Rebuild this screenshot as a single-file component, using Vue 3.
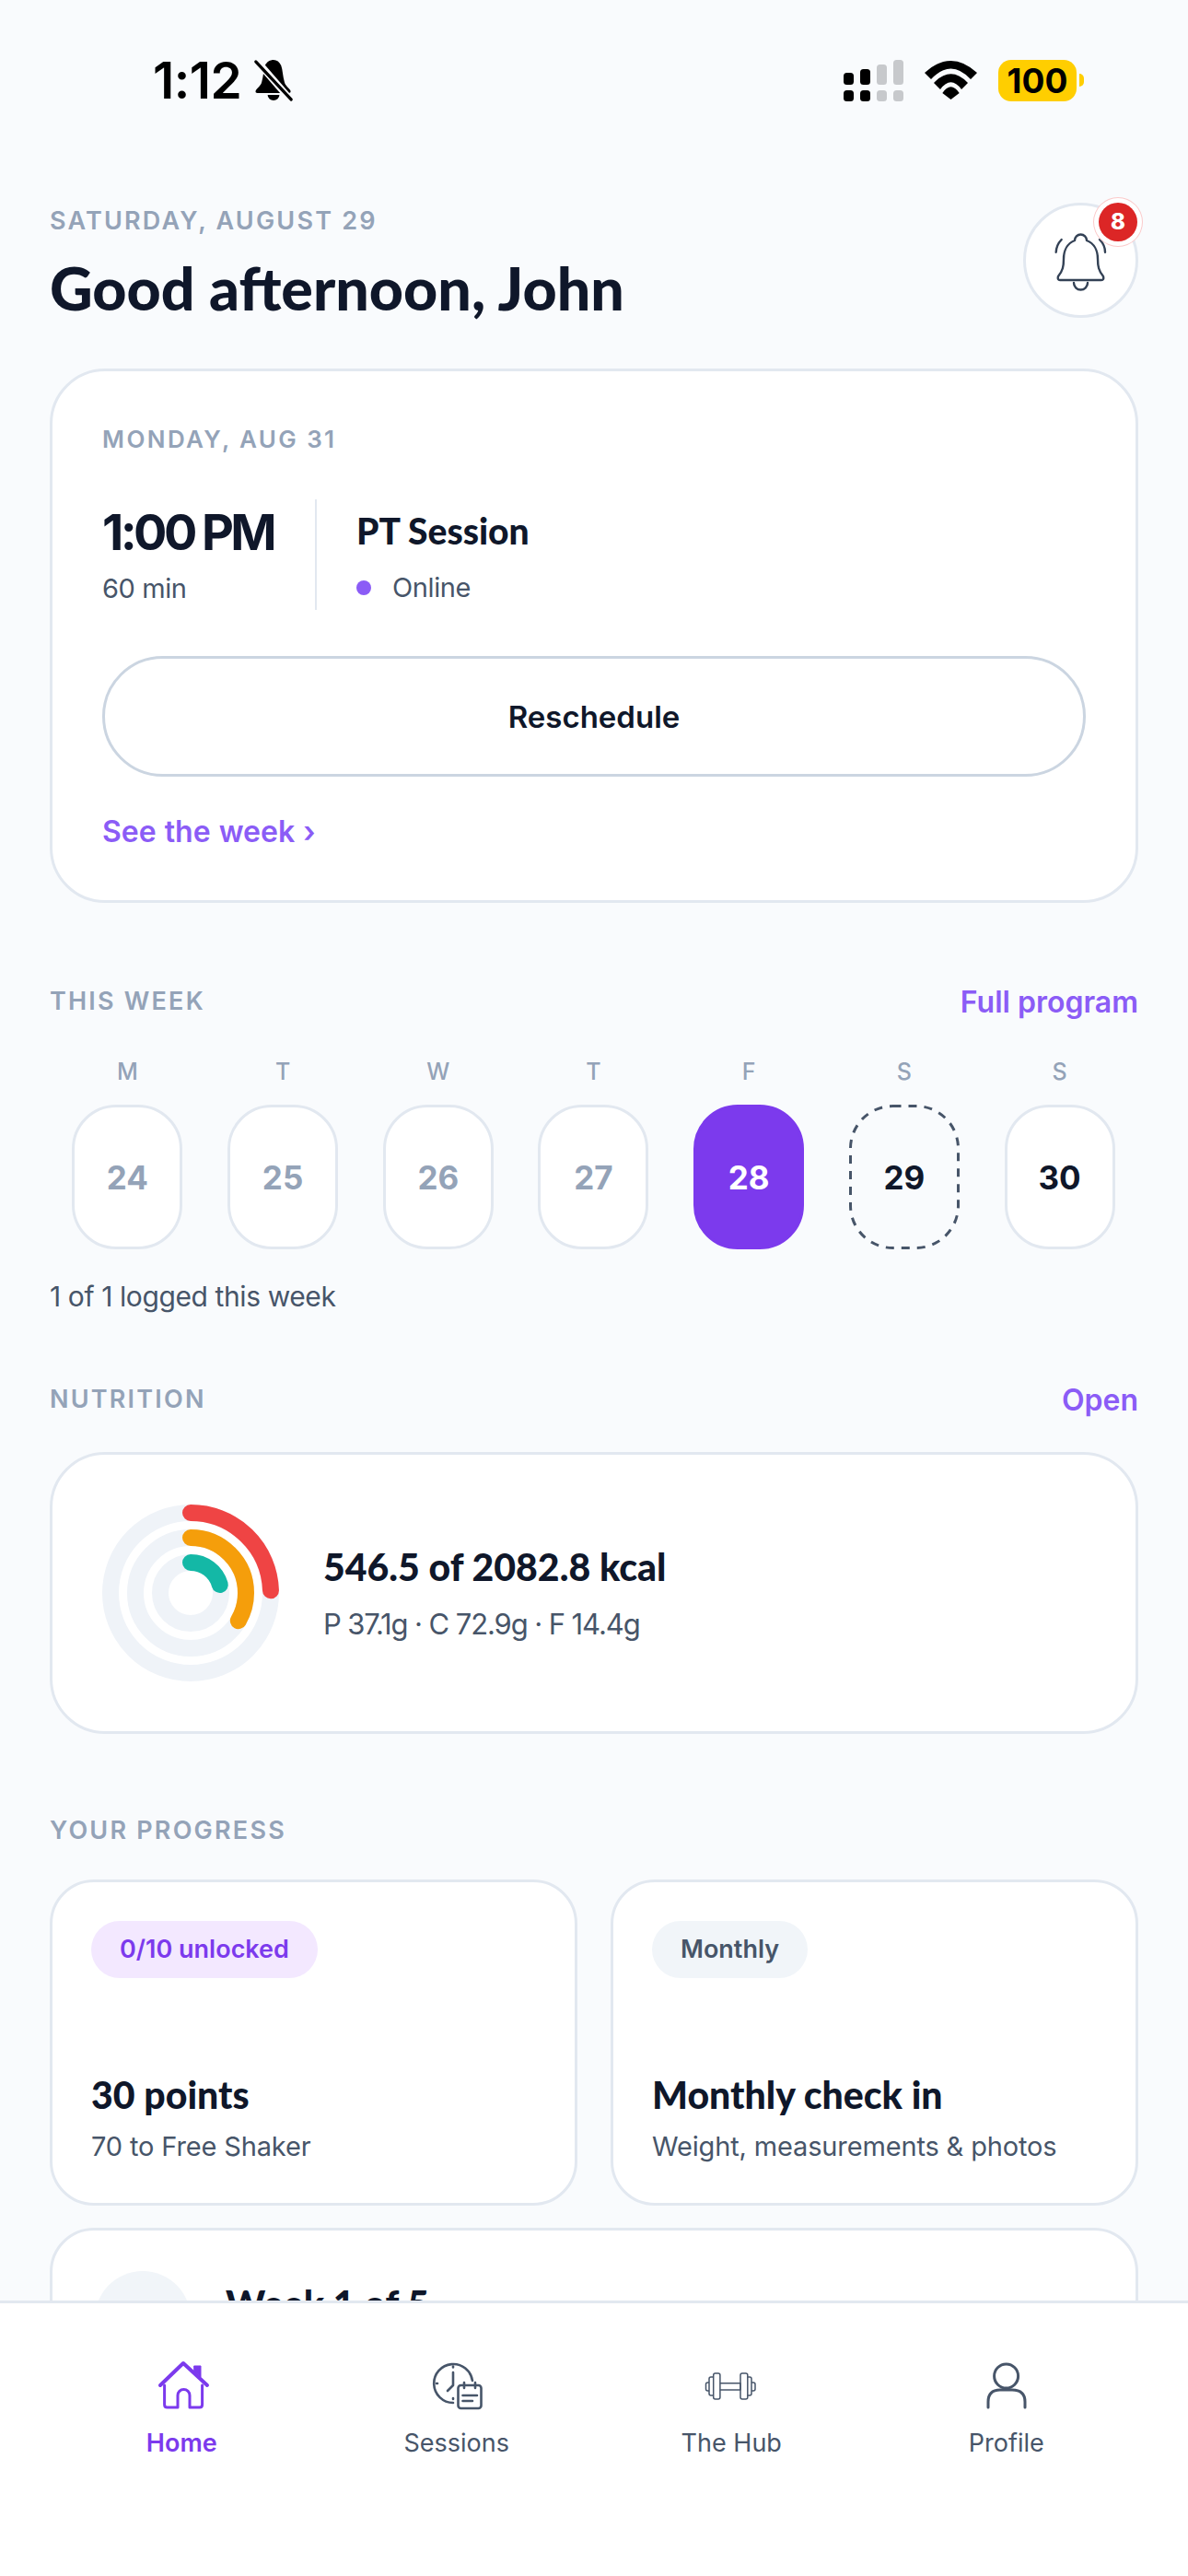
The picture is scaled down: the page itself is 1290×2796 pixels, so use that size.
<script setup>
const days = [
  { letter: 'M', num: 24, state: 'past' },
  { letter: 'T', num: 25, state: 'past' },
  { letter: 'W', num: 26, state: 'past' },
  { letter: 'T', num: 27, state: 'past' },
  { letter: 'F', num: 28, state: 'done' },
  { letter: 'S', num: 29, state: 'today' },
  { letter: 'S', num: 30, state: 'next' }
]

// angle = how far the arc runs clockwise from 12 o'clock
const rings = [
  { r: 87, angle: 88, color: '#ef4444' },
  { r: 60, angle: 120, color: '#f59e0b' },
  { r: 33, angle: 74, color: '#14b8a6' }
]

const dash = (ring) => {
  const len = 2 * Math.PI * ring.r
  return `${(len * ring.angle) / 360} ${len}`
}
</script>

<template>
  <div class="page">
    <div class="status-bar">
      <div class="status-left">
        <span class="clock">1:12</span>
        <svg class="mute" width="42" height="46" viewBox="0 0 46 46" preserveAspectRatio="none">
          <path d="M23 1c4 0 7 2 9 6 2 5 2 12 4 18 1 4 5 6 7 9 1 2 0 3-2 3H4c-2 0-3-1-2-3 2-3 6-5 7-9 2-6 2-13 4-18 2-4 6-6 10-6z" fill="#000" />
          <path d="M16 39a7 6 0 0 0 14 0z" fill="#000" />
          <path d="M4 3l38 40" stroke="#f9fafc" stroke-width="8" />
          <path d="M2 3l42 41" stroke="#000" stroke-width="3.4" stroke-linecap="round" />
        </svg>
      </div>
      <div class="status-right">
        <svg width="65" height="45" viewBox="0 0 65 45">
          <rect x="0" y="14" width="11" height="13" rx="3.5" />
          <rect x="18" y="10" width="11" height="17" rx="3.5" />
          <rect x="36" y="5" width="11" height="22" rx="3.5" fill="#c7c9cc" />
          <rect x="54" y="0" width="11" height="27" rx="3.5" fill="#c7c9cc" />
          <rect x="0" y="33" width="11" height="12" rx="3.5" />
          <rect x="18" y="33" width="11" height="12" rx="3.5" />
          <rect x="36" y="33" width="11" height="12" rx="3.5" fill="#c7c9cc" />
          <rect x="54" y="33" width="11" height="12" rx="3.5" fill="#c7c9cc" />
        </svg>
        <svg width="57" height="42" viewBox="0 0 57 42">
          <path d="M0 13Q28.5-13 57 13L50 20Q28.5-3 7 20Z" />
          <path d="M10 24Q28.5 4.600 47 24L40 31Q28.500 15.600 17 31Z" />
          <path d="M19.300 35Q28.500 21.600 37.700 35L28.500 42Z" />
        </svg>
        <div class="battery">
          <div class="battery-body">100</div>
          <div class="battery-tip"></div>
        </div>
      </div>
    </div>

    <main class="content">
      <header class="header">
        <div>
          <div class="eyebrow">SATURDAY, AUGUST 29</div>
          <h1 class="greeting">Good afternoon, John</h1>
        </div>
        <div class="bell-btn">
          <svg width="66" height="68" viewBox="0 0 66 68" fill="none" stroke="#334155" stroke-width="2.400" stroke-linecap="round" stroke-linejoin="round">
            <path d="M26 12a6.500 6.500 0 0 1 13 0C47 15 51 23 51 32C51 40 52 45 57 51Q58 55 55 55H10Q7 55 8 51C13 45 14 40 14 32C14 23 18 15 26 12Z" />
            <path d="M25 58a7.500 7.500 0 0 0 15 0" />
            <path d="M11.700 11Q6 17 5.700 24.700" />
            <path d="M53 11Q59 17 59 24.700" />
          </svg>
          <div class="badge">8</div>
        </div>
      </header>

      <section class="card session-card">
        <div class="card-date">MONDAY, AUG 31</div>
        <div class="session-row">
          <div class="session-time">
            <div class="time">1:00 PM</div>
            <div class="muted">60 min</div>
          </div>
          <div class="session-info">
            <div class="session-title">PT Session</div>
            <div class="muted online"><span class="dot"></span>Online</div>
          </div>
        </div>
        <button class="reschedule">Reschedule</button>
        <a class="see-week">See the week&nbsp;›</a>
      </section>

      <div class="section-head week-head">
        <span class="eyebrow">THIS WEEK</span>
        <a class="link">Full program</a>
      </div>
      <div class="week">
        <div v-for="d in days" :key="d.num" class="day">
          <span class="day-letter">{{ d.letter }}</span>
          <div class="day-pill" :class="d.state">
            <svg v-if="d.state === 'today'" class="dashes" width="120" height="157" viewBox="0 0 120 157" fill="none">
              <rect x="1.500" y="1.500" width="117" height="154" rx="46" stroke="#475569" stroke-width="3" stroke-dasharray="9 8" />
            </svg>
            {{ d.num }}
          </div>
        </div>
      </div>
      <p class="logged">1 of 1 logged this week</p>

      <div class="section-head nutrition-head">
        <span class="eyebrow">NUTRITION</span>
        <a class="link">Open</a>
      </div>
      <section class="card nutrition">
        <svg width="192" height="192" viewBox="0 0 192 192" fill="none" stroke-width="18">
          <circle v-for="ring in rings" :key="ring.r" cx="96" cy="96" :r="ring.r" stroke="#eff3f8" />
          <circle
            v-for="ring in rings"
            :key="ring.color"
            cx="96"
            cy="96"
            :r="ring.r"
            :stroke="ring.color"
            stroke-linecap="round"
            :stroke-dasharray="dash(ring)"
            transform="rotate(-90 96 96)"
          />
        </svg>
        <div>
          <div class="kcal">546.5 of 2082.8 kcal</div>
          <div class="macros">P 37.1g · C 72.9g · F 14.4g</div>
        </div>
      </section>

      <div class="section-head progress-head">
        <span class="eyebrow">YOUR PROGRESS</span>
      </div>
      <div class="progress-grid">
        <section class="card tile">
          <span class="tag tag-purple">0/10 unlocked</span>
          <div class="tile-title">30 points</div>
          <div class="tile-sub">70 to Free Shaker</div>
        </section>
        <section class="card tile">
          <span class="tag tag-grey">Monthly</span>
          <div class="tile-title">Monthly check in</div>
          <div class="tile-sub">Weight, measurements &amp; photos</div>
        </section>
      </div>
      <section class="card program">
        <div class="avatar"></div>
        <div class="tile-title">Week 1 of 5</div>
      </section>
    </main>

    <nav class="tabbar">
      <div class="tab active">
        <svg class="home-icon" width="60" height="56" viewBox="0 0 60 56" fill="none" stroke="#7c3aed" stroke-width="3" stroke-linecap="round" stroke-linejoin="round">
          <path d="M6 27L31 3L57 27" stroke-width="4" />
          <path d="M43 6h7v12l-7-6z" fill="#7c3aed" stroke-width="1" />
          <path d="M10.600 27V48q0 3 3 3H25V38a6.500 6.500 0 0 1 13 0V51H48.600q3 0 3-3V27" />
        </svg>
        <span>Home</span>
      </div>
      <div class="tab">
        <svg width="60" height="56" viewBox="0 0 60 56" fill="none" stroke="#475569" stroke-width="2.600" stroke-linecap="round" stroke-linejoin="round">
          <path d="M47 22A21 21 0 1 0 26 46" />
          <path d="M26 13V27L20 33" />
          <path d="M26 6.500v1M8 25h1M26 41v1" />
          <rect x="31.500" y="27" width="25" height="25" rx="3" />
          <path d="M38 24v6M50 24v6M36.500 38H52M36.500 44H47" />
        </svg>
        <span>Sessions</span>
      </div>
      <div class="tab">
        <svg width="60" height="56" viewBox="0 0 60 56" fill="none" stroke="#475569" stroke-width="1.500" stroke-linejoin="round">
          <rect x="10.700" y="14" width="7.200" height="28" rx="2" />
          <rect x="40" y="14" width="7.800" height="28" rx="2" />
          <path d="M10.700 18H8a2 2 0 0 0-2 2V36a2 2 0 0 0 2 2H10.700M47.800 18H50a2 2 0 0 1 2 2V36a2 2 0 0 1-2 2H47.800" />
          <path d="M6 24H4.500a2 2 0 0 0-2 2V31a2 2 0 0 0 2 2H6M52 24H54a2 2 0 0 1 2 2V31a2 2 0 0 1-2 2H52" />
          <path d="M17.900 24.700H40V32H17.900" />
        </svg>
        <span>The Hub</span>
      </div>
      <div class="tab">
        <svg width="60" height="56" viewBox="0 0 60 56" fill="none" stroke="#475569" stroke-width="3" stroke-linecap="round">
          <circle cx="29.600" cy="17" r="13" />
          <path d="M10 51V45Q10 32 23 32H36Q50 32 50 45V51" />
        </svg>
        <span>Profile</span>
      </div>
    </nav>
  </div>
</template>

<style scoped>
.page {
  position: relative;
  width: 1290px;
  height: 2796px;
  overflow: hidden;
  background: #f9fbfd;
  font-family: Inter, "Noto Sans", sans-serif;
  color: #0f172a;
}

.status-bar {
  height: 174px;
  display: flex;
  justify-content: space-between;
  align-items: center;
  padding: 0 113px 0 166px;
}
.status-left { display: flex; align-items: center; gap: 14px; }
.clock { font-size: 55px; font-weight: 600; color: #000; letter-spacing: -0.5px; line-height: 1; }
.status-right { display: flex; align-items: center; gap: 23px; }
.battery { display: flex; align-items: center; gap: 3px; }
.battery-body {
  width: 85px; height: 45px; background: #ffce00; border-radius: 14px;
  font-size: 37px; font-weight: 700; color: #000; text-align: center; line-height: 45px;
}
.battery-tip { width: 5px; height: 14px; background: #ffce00; border-radius: 0 5px 5px 0; }

.content { padding: 46px 54px 0; }

.header { display: flex; justify-content: space-between; }
.eyebrow {
  font-size: 27px; font-weight: 600; letter-spacing: 2.2px; color: #94a3b8; line-height: 40px;
}
.greeting {
  margin: 14px 0 0; font-family: Lato, sans-serif; font-size: 64.500px; font-weight: 900; line-height: 76px; color: #0f172a;
}
.bell-btn {
  position: relative; width: 125px; height: 125px; box-sizing: border-box; border-radius: 50%;
  background: #fff; border: 3px solid #e2e8f0; display: flex; align-items: center; justify-content: center;
}
.badge {
  position: absolute; top: -3px; right: -2px; width: 42px; height: 42px; border-radius: 50%;
  background: #dc2626; color: #fff; font-size: 24px; font-weight: 800; text-align: center; line-height: 42px;
  box-shadow: 0 0 0 5px #fff, 0 0 0 6px #fbcaca;
}

.card { background: #fff; border: 3px solid #e2e8f0; border-radius: 60px; box-sizing: border-box; }

.session-card { margin-top: 50px; height: 580px; padding: 54px 54px 0; }
.card-date { font-size: 26px; font-weight: 600; letter-spacing: 2.4px; color: #94a3b8; line-height: 40px; }
.session-row { display: flex; height: 120px; margin-top: 45px; }
.session-time { width: 231px; border-right: 2px solid #e2e8f0; box-sizing: content-box; }
.time { font-size: 54px; font-weight: 700; letter-spacing: -3.6px; word-spacing: -1px; line-height: 70px; margin-top: 1px; }
.muted { font-size: 29px; color: #475569; line-height: 40px; margin-top: 6px; letter-spacing: -0.4px; }
.session-info { padding-left: 43px; }
.session-title { font-family: Lato, sans-serif; font-size: 39px; font-weight: 900; line-height: 68px; margin-top: 0; }
.online { display: flex; align-items: center; gap: 23px; margin-top: 8px; }
.dot { width: 16px; height: 16px; border-radius: 50%; background: #8b5cf6; }
.reschedule {
  display: block; width: 100%; height: 131px; margin-top: 50px; background: #fff; border: 3px solid #cbd5e1; border-radius: 66px;
  font-family: inherit; font-size: 33px; font-weight: 600; color: #0f172a;
}
.see-week { display: block; margin-top: 40px; font-size: 32px; font-weight: 600; color: #8b5cf6; line-height: 40px; word-spacing: 1px; }

.section-head { display: flex; justify-content: space-between; align-items: center; }
.link { font-size: 32px; font-weight: 600; color: #8b5cf6; line-height: 40px; position: relative; top: 1px; }
.week-head { margin-top: 87px; }

.week { display: grid; grid-template-columns: repeat(7, 1fr); margin-top: 40px; padding-right: 1px; }
.day { display: flex; flex-direction: column; align-items: center; gap: 20px; }
.day-letter { font-size: 25px; font-weight: 500; color: #94a3b8; line-height: 32px; }
.day-pill {
  position: relative; width: 120px; height: 157px; box-sizing: border-box; border-radius: 48px; background: #fff; border: 3px solid #e2e8f0;
  display: flex; align-items: center; justify-content: center; font-size: 35px; font-weight: 700;
}
.day-pill.past { color: #94a3b8; }
.day-pill.done { background: #7c3aed; border-color: #7c3aed; color: #fff; }
.day-pill.today { background: transparent; border: none; }
.dashes { position: absolute; top: 0; left: 0; }
.logged { margin: 31px 0 0; font-size: 30px; line-height: 40px; color: #475569; letter-spacing: -0.4px; }

.nutrition-head { margin-top: 72px; }
.nutrition {
  height: 306px; margin-top: 37px; display: flex; align-items: center; gap: 48px; padding-left: 54px;
}
.kcal { font-family: Lato, sans-serif; font-size: 41px; font-weight: 900; line-height: 52px; }
.macros { margin-top: 16px; font-size: 31px; color: #475569; line-height: 40px; letter-spacing: -1.1px; }

.progress-head { margin-top: 85px; }
.progress-grid { display: grid; grid-template-columns: 1fr 1fr; gap: 36px; margin-top: 33px; }
.tile { height: 354px; padding: 42px 42px 0; border-radius: 48px; }
.tag {
  display: inline-block; height: 62px; line-height: 62px; border-radius: 31px; padding: 0 31px; font-size: 27px; font-weight: 600;
}
.tag-purple { background: #f3e8ff; color: #7c3aed; }
.tag-grey { background: #f1f5f9; color: #475569; }
.tile-title { font-family: Lato, sans-serif; font-size: 41px; font-weight: 900; line-height: 52px; margin-top: 101px; }
.tile-sub { margin-top: 10px; font-size: 29px; color: #475569; line-height: 40px; letter-spacing: -0.15px; }

.program { display: flex; gap: 38px; height: 300px; margin-top: 24px; padding: 44px 46px; border-radius: 48px; }
.program .tile-title { margin-top: 10px; }
.avatar { width: 104px; height: 104px; border-radius: 50%; background: #f1f5f9; }

.tabbar {
  position: absolute; left: 0; right: 0; bottom: 0; height: 299px; box-sizing: border-box; background: #fff;
  border-top: 3px solid #e2e8f0; padding: 62px 48px 0; display: grid; grid-template-columns: repeat(4, 1fr);
}
.tab { display: flex; flex-direction: column; align-items: center; gap: 16px; font-size: 27px; line-height: 36px; color: #475569; }
.tab.active { color: #7c3aed; font-weight: 600; }
.home-icon { margin-left: 2px; }
</style>
